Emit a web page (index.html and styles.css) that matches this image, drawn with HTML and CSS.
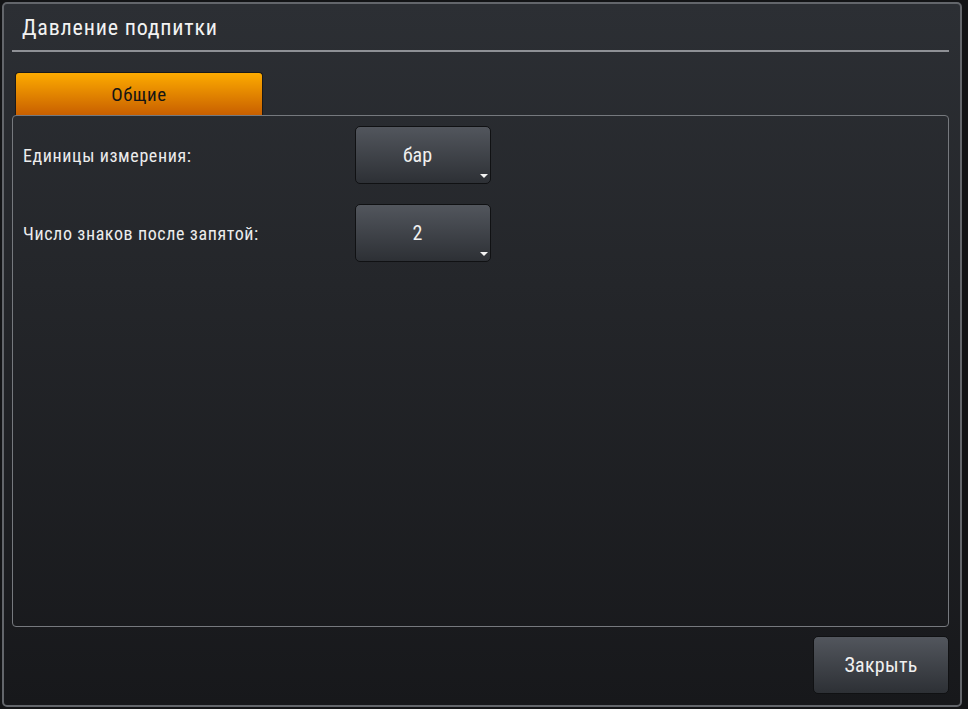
FILE: index.html
```html
<!DOCTYPE html>
<html lang="ru">
<head>
<meta charset="utf-8">
<title>Давление подпитки</title>
<link rel="stylesheet" href="styles.css">
</head>
<body>
<div class="dialog">
  <div class="header">Давление подпитки</div>
  <div class="rule"></div>
  <div class="tabs">
    <div class="tab active">Общие</div>
  </div>
  <div class="panel">
    <div class="form">
      <div class="label">Единицы измерения:</div>
      <div class="select">бар</div>
      <div class="label">Число знаков после запятой:</div>
      <div class="select">2</div>
    </div>
  </div>
  <div class="footer">
    <div class="button">Закрыть</div>
  </div>
</div>
</body>
</html>
```
FILE: styles.css
```css
html, body {
  margin: 0;
  padding: 0;
}
body {
  width: 968px;
  height: 709px;
  background: #131416;
  font-family: "Roboto Condensed", Roboto, "Noto Sans", sans-serif;
  overflow: hidden;
}
.dialog {
  box-sizing: border-box;
  margin: 2px 0 0 2px;
  width: 960px;
  height: 705px;
  border: 2px solid #63666b;
  border-radius: 5px;
  background: linear-gradient(#2c2f34 0%, #24262a 40%, #17181b 100%);
  padding: 0 11px 0 8px;
  display: flex;
  flex-direction: column;
}
.header {
  height: 46px;
  display: flex;
  align-items: center;
  padding-left: 10px;
  padding-top: 1px;
  box-sizing: border-box;
  color: #f2f2f2;
  font-size: 22px;
  letter-spacing: 0.8px;
}
.rule {
  height: 2px;
  background: #8e9095;
}
.tabs {
  display: flex;
  padding: 20px 0 0 3px;
}
.tab {
  width: 248px;
  height: 43px;
  box-sizing: border-box;
  display: flex;
  align-items: center;
  justify-content: center;
  font-size: 19px;
  letter-spacing: 0.5px;
  color: #141414;
  border: 1px solid #1a1a1a;
  border-bottom: none;
  border-radius: 4px 4px 0 0;
}
.tab.active {
  background: linear-gradient(#fdab00, #c85f00);
}
.panel {
  height: 512px;
  box-sizing: border-box;
  border: 1px solid #76797e;
  border-radius: 4px;
  padding: 10px 10px;
}
.form {
  display: grid;
  grid-template-columns: 332px 136px;
  grid-auto-rows: 58px;
  row-gap: 20px;
  align-items: center;
}
.label {
  color: #ececec;
  font-size: 18px;
  letter-spacing: 0.6px;
}
.select, .button {
  position: relative;
  box-sizing: border-box;
  height: 58px;
  display: flex;
  align-items: center;
  justify-content: center;
  color: #f0f0f0;
  font-size: 20px;
  border: 1px solid #101113;
  border-radius: 5px;
  background: linear-gradient(#52565d, #2d3035);
}
.select {
  padding-right: 11px;
}
.select::after {
  content: "";
  position: absolute;
  right: 2px;
  bottom: 5px;
  border-left: 4px solid transparent;
  border-right: 4px solid transparent;
  border-top: 4px solid #f4f4f4;
}
.footer {
  display: flex;
  justify-content: flex-end;
  padding-top: 9px;
}
.button {
  width: 136px;
  letter-spacing: 0.3px;
}
```
